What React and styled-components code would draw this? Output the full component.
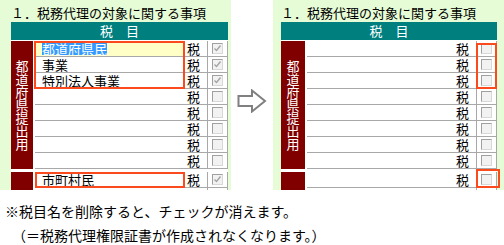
import styled, { createGlobalStyle } from "styled-components";

const GlobalStyle = createGlobalStyle`
  body {
    margin: 0;
    background: #ffffff;
    font-family: "Noto Sans CJK JP", "Noto Sans", sans-serif;
    color: #000000;
  }
`;

const leftRows = [
  { name: "都道府県民", checked: true, selected: true },
  { name: "事業", checked: true },
  { name: "特別法人事業", checked: true },
  { name: "" },
  { name: "" },
  { name: "" },
  { name: "" },
  { name: "" },
];

const Check = ({ checked }) => (
  <Box>
    {checked && (
      <svg width="9" height="9" viewBox="0 0 9 9">
        <polyline points="1.5,4.5 3.5,6.5 7.5,1.5" fill="none" stroke="#a4a4a4" strokeWidth="1.4" />
      </svg>
    )}
  </Box>
);

const TaxRow = ({ name, checked, selected, fill }) => (
  <Row>
    <Input $fill={fill}>{selected ? <Selected>{name}</Selected> : name}</Input>
    <Zei>税</Zei>
    <CheckCell>
      <Check checked={checked} />
    </CheckCell>
  </Row>
);

const TaxTable = ({ side }) => {
  const left = side === "left";
  const rows = left ? leftRows : leftRows.map(() => ({ name: "" }));
  return (
    <Panel $pad={left ? 11 : 8}>
      <Title>１．税務代理の対象に関する事項</Title>
      <Table $width={left ? 217 : 216}>
        <Header>税　目</Header>
        <Section>
          <Label $w={left ? 22 : 24}>
            <span>都道府県提出用</span>
          </Label>
          <Rows>
            <Group>
              {rows.slice(0, 3).map((r, i) => (
                <TaxRow key={i} {...r} fill={left && i === 0 ? "#ffffc6" : "#ffffff"} />
              ))}
              {left ? <Highlight $inset="0 43px 0 -1px" /> : <Highlight $inset="2px 0 0 auto" $w={21} />}
            </Group>
            {rows.slice(3).map((r, i) => (
              <TaxRow key={i} {...r} />
            ))}
          </Rows>
        </Section>
        <Section $gap>
          <Label $w={left ? 22 : 24} />
          <Rows>
            <Group>
              <TaxRow name={left ? "市町村民" : ""} checked={left} />
              {left ? <Highlight $inset="0 43px 0 0" /> : <Highlight $inset="-3px -3px 0 auto" $w={24} />}
            </Group>
            <TaxRow name="" />
          </Rows>
        </Section>
      </Table>
    </Panel>
  );
};

const App = () => (
  <>
    <GlobalStyle />
    <Top>
      <TaxTable side="left" />
      <ArrowSlot>
        <svg width="30" height="24" viewBox="0 0 30 24">
          <path d="M1.5 7 H15 V1.5 L28 12 L15 22.5 V17 H1.5 Z" fill="#ffffff" stroke="#808080" strokeWidth="2" strokeLinejoin="miter" />
        </svg>
      </ArrowSlot>
      <TaxTable side="right" />
    </Top>
    <Note>
      <p>※税目名を削除すると、チェックが消えます。</p>
      <p>　（＝税務代理権限証書が作成されなくなります。）</p>
    </Note>
  </>
);

const Top = styled.div`
  display: flex;
  height: 190px;
  overflow: hidden;
`;
const ArrowSlot = styled.div`
  width: 42px;
  flex-shrink: 0;
  padding: 89px 0 0 6px;
  box-sizing: border-box;
`;
const Panel = styled.div`
  width: 231px;
  flex-shrink: 0;
  background: #e6fcd6;
  padding-left: ${(p) => p.$pad}px;
  box-sizing: border-box;
  overflow: hidden;
`;
const Title = styled.div`
  height: 22px;
  padding-top: 4px;
  box-sizing: border-box;
  font-size: 13px;
  line-height: 18px;
  white-space: nowrap;
`;
const Table = styled.div`
  width: ${(p) => p.$width}px;
  background: #ffffff;
`;
const Header = styled.div`
  height: 18px;
  margin-bottom: 1px;
  background: #007f7f;
  color: #ffffff;
  font-size: 13px;
  line-height: 18px;
  text-align: center;
`;
const Section = styled.div`
  display: flex;
  gap: 2px;
  margin-top: ${(p) => (p.$gap ? 3 : 0)}px;
`;
const Label = styled.div`
  width: ${(p) => p.$w}px;
  flex-shrink: 0;
  background: #800000;
  color: #ffffff;
  display: flex;
  align-items: center;
  justify-content: center;
  span {
    writing-mode: vertical-rl;
    font-size: 13px;
    line-height: 1;
    letter-spacing: 0;
  }
`;
const Rows = styled.div`
  flex: 1;
  min-width: 0;
  display: flex;
  flex-direction: column;
`;
const Group = styled.div`
  position: relative;
`;
const Highlight = styled.div`
  position: absolute;
  inset: ${(p) => p.$inset};
  width: ${(p) => (p.$w ? `${p.$w}px` : "auto")};
  border: 2px solid #fa4a1e;
  box-sizing: border-box;
  pointer-events: none;
`;
const Row = styled.div`
  display: grid;
  grid-template-columns: 1fr 22px 21px;
  height: 16px;
  box-sizing: border-box;
  border-bottom: 1px solid #a8a8a8;
  font-size: 13px;
  line-height: 15px;
`;
const Input = styled.div`
  background: ${(p) => p.$fill || "#ffffff"};
  padding-left: 7px;
  white-space: nowrap;
`;
const Selected = styled.span`
  display: inline-block;
  background: #3399ff;
  color: #ffffff;
  line-height: 12px;
  margin-top: 2px;
  vertical-align: top;
`;
const Zei = styled.div`
  padding-left: 2px;
`;
const CheckCell = styled.div`
  display: flex;
  align-items: center;
  justify-content: center;
  border-left: 1px solid #a8a8a8;
  border-right: 1px solid #a8a8a8;
`;
const Box = styled.span`
  width: 11px;
  height: 11px;
  box-sizing: border-box;
  border: 1px solid #a0a0a0;
  border-right-color: #d8d8d8;
  border-bottom-color: #d8d8d8;
  background: #f2f2f2;
  display: flex;
  align-items: center;
  justify-content: center;
`;
const Note = styled.div`
  padding: 9px 0 0 5px;
  font-size: 14px;
  line-height: 24px;
  white-space: nowrap;
  p {
    margin: 0;
  }
`;

export default App;
